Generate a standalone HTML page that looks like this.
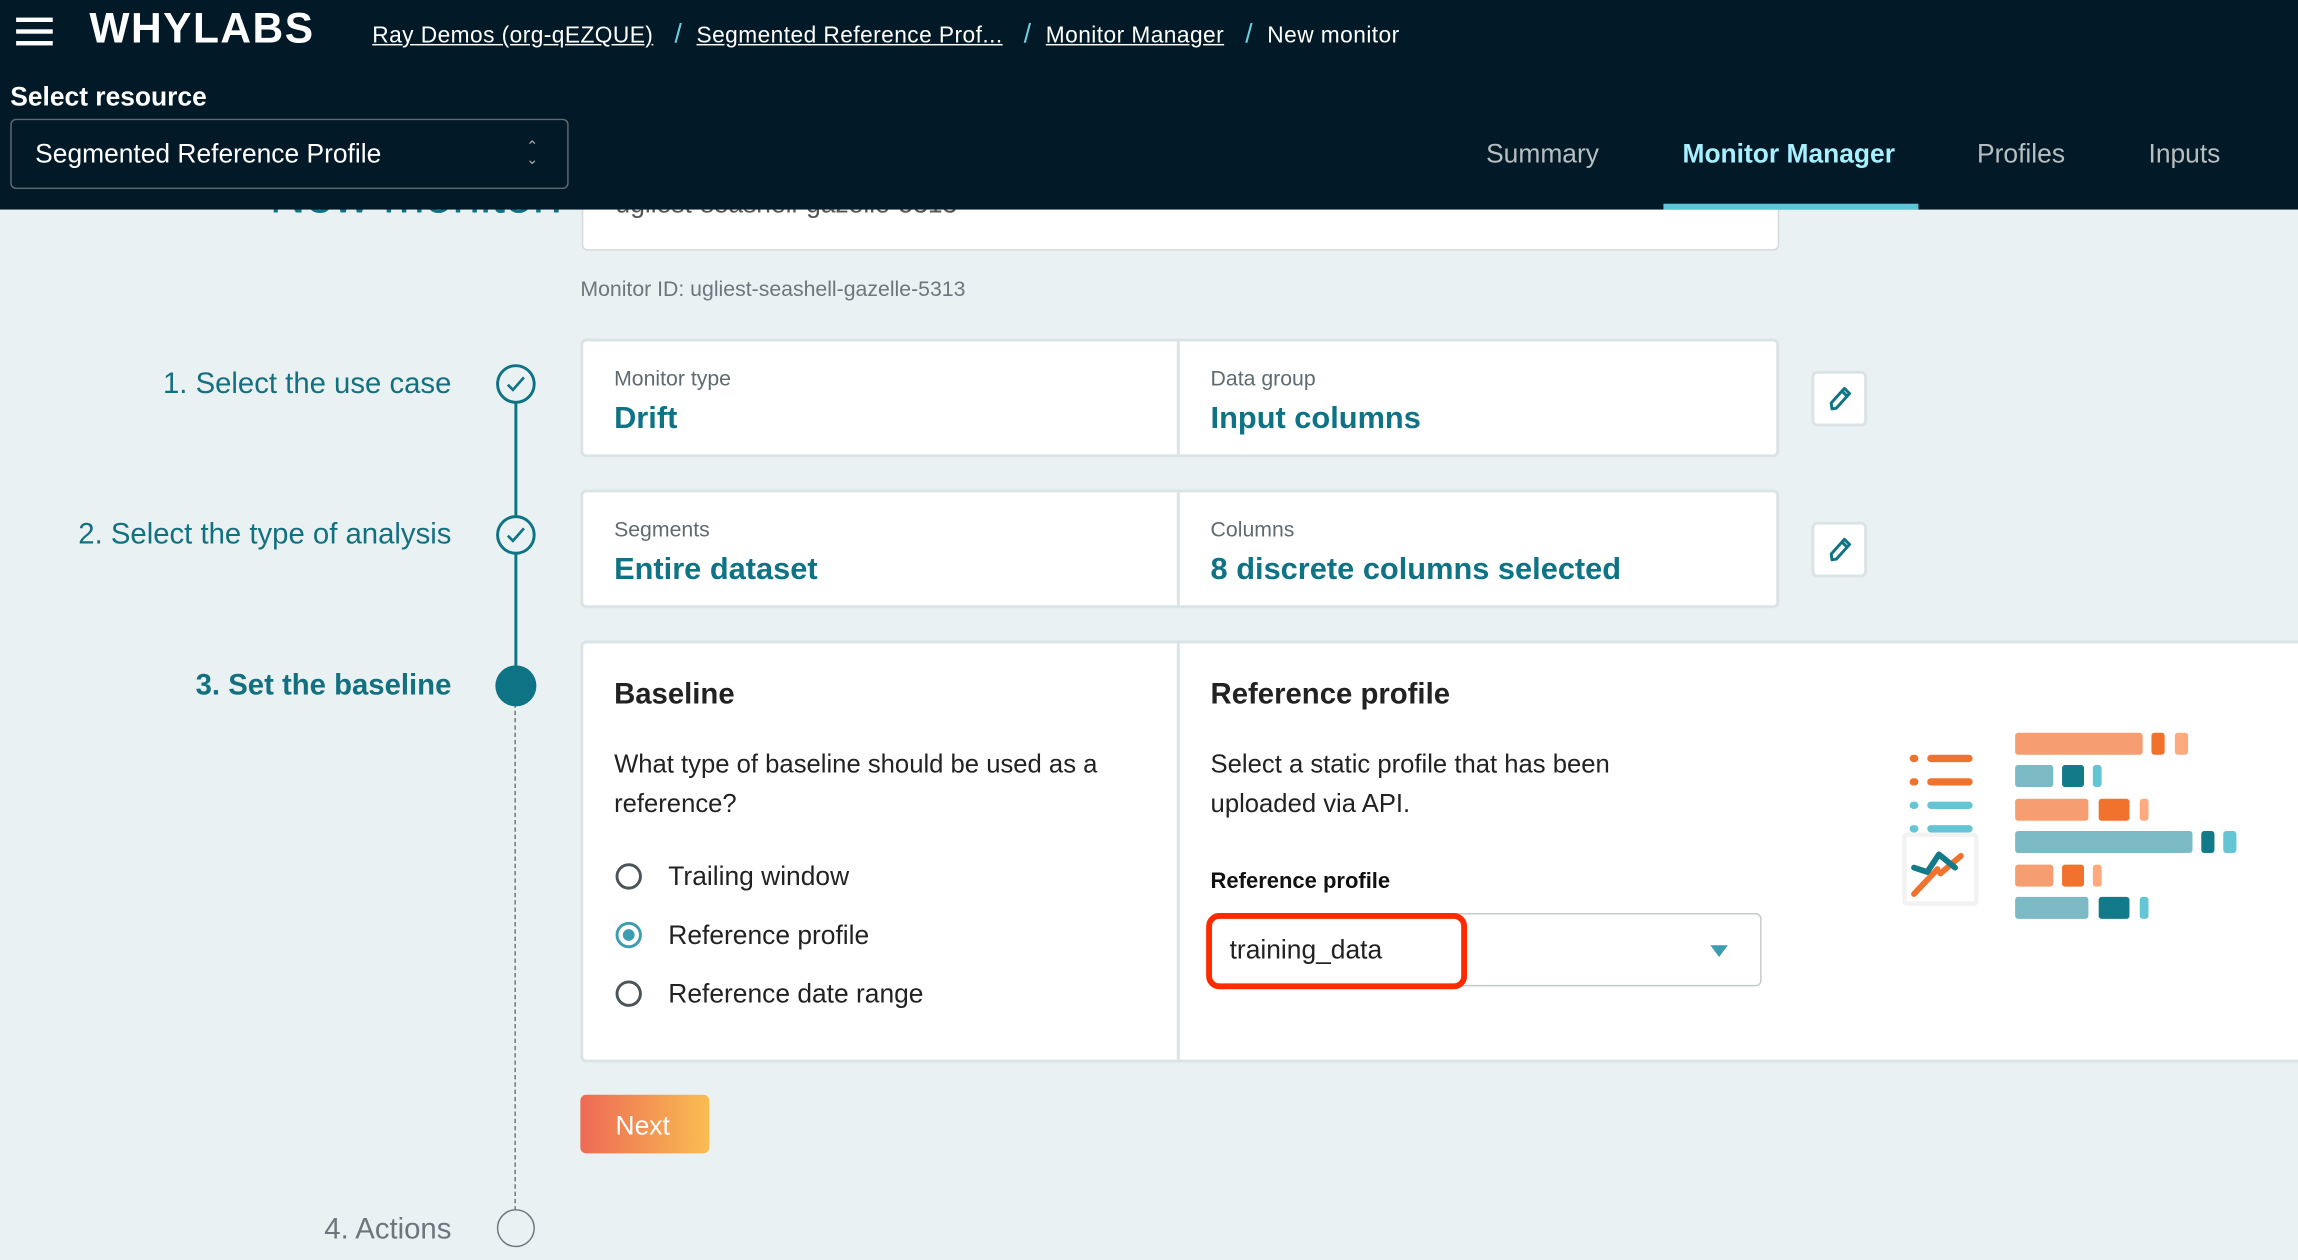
<!DOCTYPE html>
<html><head><meta charset="utf-8"><style>
html,body{margin:0;padding:0;width:2298px;height:1260px;overflow:hidden;background:#eaf1f3}
#s{position:absolute;left:0;top:0;width:1568px;height:860px;transform:scale(1.46556);transform-origin:0 0;font-family:"Liberation Sans",sans-serif;background:#eaf1f3;overflow:hidden}
.a{position:absolute;white-space:nowrap}
.hdr{position:absolute;left:0;top:0;width:1568px;height:143px;background:#021a27}
.bc{color:#fff;font-size:15.5px;text-decoration:underline;letter-spacing:0.3px}
.sl{color:#6fd0e0;font-size:18px}
.tab{color:#b7bec2;font-size:18px;top:95px}
.card{position:absolute;background:#fff;border:2px solid #dae3e6;border-radius:4px;box-sizing:border-box}
.lbl{color:#5f6b70;font-size:14.5px}
.val{color:#0e7384;font-size:21px;font-weight:bold}
.step{color:#13707f;font-size:20px;text-align:right;right:1260px}
.edit{position:absolute;width:38px;height:38px;background:#fff;border:2px solid #dae3e6;border-radius:4px;box-sizing:border-box}
.rad{position:absolute;width:18px;height:18px;border:2px solid #4b5559;border-radius:50%;box-sizing:border-box}
.rt{color:#222;font-size:18px}
.b{position:absolute;border-radius:2px}
</style></head><body><div id="s">
<div class="a" style="left:184px;top:115px;color:#0e7384;font-size:34px">New monitor:</div>
<div style="position:absolute;left:397px;top:100px;width:817px;height:71px;background:#fff;border:1px solid #d3dadd;border-radius:4px;box-sizing:border-box"></div>
<div class="a" style="left:420px;top:129px;color:#555;font-size:18px">ugliest-seashell-gazelle-5313</div>
<div class="hdr"></div>
<div style="position:absolute;left:11px;top:12px;width:25px;height:3px;background:#fff;box-shadow:0 8px 0 #fff,0 16px 0 #fff"></div>
<div class="a" style="left:61px;top:4px;color:#fff;font-size:29px;font-weight:bold;letter-spacing:1px">WHYLABS</div>
<div class="a" style="left:254px;top:13px"><span class="bc">Ray Demos (org-qEZQUE)</span> <span class="sl">&nbsp;&nbsp;/&nbsp;&nbsp;</span><span class="bc">Segmented Reference Prof...</span> <span class="sl">&nbsp;&nbsp;/&nbsp;&nbsp;</span><span class="bc">Monitor Manager</span> <span class="sl">&nbsp;&nbsp;/&nbsp;&nbsp;</span><span style="color:#fff;font-size:15.5px;letter-spacing:0.3px">New monitor</span></div>
<div class="a" style="left:7px;top:56px;color:#fff;font-size:18px;font-weight:bold">Select resource</div>
<div style="position:absolute;left:7px;top:81px;width:381px;height:48px;border:1px solid #5d6a70;border-radius:4px;box-sizing:border-box"></div>
<div class="a" style="left:24px;top:95px;color:#fff;font-size:18px">Segmented Reference Profile</div>
<div class="a" style="left:359px;top:96px;color:#aaa;font-size:10px;line-height:9px">&#8963;<br>&#8964;</div>
<div class="a tab" style="left:1014px">Summary</div>
<div class="a tab" style="left:1148px;color:#a6f0ff;font-weight:bold">Monitor Manager</div>
<div class="a tab" style="left:1349px">Profiles</div>
<div class="a tab" style="left:1466px">Inputs</div>
<div style="position:absolute;left:1135px;top:139px;width:174px;height:4px;background:#5cc6d6"></div>

<div class="a" style="left:396px;top:190px;color:#6b777c;font-size:14.5px">Monitor ID: ugliest-seashell-gazelle-5313</div>

<div style="position:absolute;left:351px;top:274px;width:1.5px;height:182px;background:#0e7384"></div>
<div style="position:absolute;left:351px;top:480px;height:346px;border-left:1.5px dashed #6b777c"></div>
<svg class="a" style="left:338px;top:248px" width="28" height="28"><circle cx="14" cy="14" r="12.5" fill="#eaf1f3" stroke="#0e7384" stroke-width="2"/><path d="M8.5 14.5l3.5 3.5 7.5-8.5" fill="none" stroke="#0e7384" stroke-width="1.8"/></svg>
<svg class="a" style="left:338px;top:351px" width="28" height="28"><circle cx="14" cy="14" r="12.5" fill="#eaf1f3" stroke="#0e7384" stroke-width="2"/><path d="M8.5 14.5l3.5 3.5 7.5-8.5" fill="none" stroke="#0e7384" stroke-width="1.8"/></svg>
<div style="position:absolute;left:338px;top:454px;width:28px;height:28px;border-radius:50%;background:#0e7384"></div>
<div style="position:absolute;left:339px;top:825px;width:26px;height:26px;border-radius:50%;border:1.5px solid #6b777c;box-sizing:border-box;background:#eaf1f3"></div>
<div class="a step" style="top:251px">1. Select the use case</div>
<div class="a step" style="top:354px">2. Select the type of analysis</div>
<div class="a step" style="top:457px;font-weight:bold">3. Set the baseline</div>
<div class="a step" style="top:828px;color:#6b777c">4. Actions</div>

<div class="card" style="left:396px;top:231px;width:818px;height:81px"></div>
<div style="position:absolute;left:803px;top:233px;width:2px;height:77px;background:#dae3e6"></div>
<div class="a lbl" style="left:419px;top:251px">Monitor type</div>
<div class="a val" style="left:419px;top:274px">Drift</div>
<div class="a lbl" style="left:826px;top:251px">Data group</div>
<div class="a val" style="left:826px;top:274px">Input columns</div>
<div class="card" style="left:396px;top:334px;width:818px;height:81px"></div>
<div style="position:absolute;left:803px;top:336px;width:2px;height:77px;background:#dae3e6"></div>
<div class="a lbl" style="left:419px;top:354px">Segments</div>
<div class="a val" style="left:419px;top:377px">Entire dataset</div>
<div class="a lbl" style="left:826px;top:354px">Columns</div>
<div class="a val" style="left:826px;top:377px">8 discrete columns selected</div>

<div class="edit" style="left:1236px;top:253px"><svg width="34" height="34" style="position:absolute;left:0;top:0"><path d="M12 24l-0.5-4 9-10 3.5 3.5-9 10z M18.5 11.5l3.5 3.5" fill="none" stroke="#0e7384" stroke-width="2" stroke-linejoin="round"/></svg></div>
<div class="edit" style="left:1236px;top:356px"><svg width="34" height="34" style="position:absolute;left:0;top:0"><path d="M12 24l-0.5-4 9-10 3.5 3.5-9 10z M18.5 11.5l3.5 3.5" fill="none" stroke="#0e7384" stroke-width="2" stroke-linejoin="round"/></svg></div>

<div class="card" style="left:396px;top:437px;width:1190px;height:288px"></div>
<div style="position:absolute;left:803px;top:439px;width:2px;height:284px;background:#dae3e6"></div>
<div class="a" style="left:419px;top:463px;color:#222;font-size:20px;font-weight:bold">Baseline</div>
<div class="a" style="left:419px;top:508px;color:#222;font-size:17.5px;line-height:27px">What type of baseline should be used as a<br>reference?</div>
<div class="rad" style="left:420px;top:589px"></div>
<div class="a rt" style="left:456px;top:588px">Trailing window</div>
<div class="rad" style="left:420px;top:629px;border-color:#3a9db1"><div style="position:absolute;left:3px;top:3px;width:8px;height:8px;border-radius:50%;background:#3a9db1"></div></div>
<div class="a rt" style="left:456px;top:628px">Reference profile</div>
<div class="rad" style="left:420px;top:669px"></div>
<div class="a rt" style="left:456px;top:668px">Reference date range</div>

<div class="a" style="left:826px;top:463px;color:#222;font-size:20px;font-weight:bold">Reference profile</div>
<div class="a" style="left:826px;top:508px;color:#222;font-size:17.5px;line-height:27px">Select a static profile that has been<br>uploaded via API.</div>
<div class="a" style="left:826px;top:593px;color:#111;font-size:15px;font-weight:bold">Reference profile</div>
<div style="position:absolute;left:826px;top:623px;width:376px;height:50px;border:1px solid #c4c9cb;border-radius:4px;box-sizing:border-box"></div>
<div style="position:absolute;left:823px;top:623px;width:178px;height:52px;border:4px solid #ff2a00;border-radius:9px;box-sizing:border-box"></div>
<div class="a" style="left:839px;top:638px;color:#222;font-size:18px">training_data</div>
<div style="position:absolute;left:1167px;top:645px;width:0;height:0;border-left:6px solid transparent;border-right:6px solid transparent;border-top:8px solid #3a9db1"></div>

<div class="b" style="left:1303px;top:515px;width:6px;height:5px;background:#f0722d;border-radius:3px"></div>
<div class="b" style="left:1315px;top:515px;width:31px;height:5px;background:#f0722d;border-radius:3px"></div>
<div class="b" style="left:1303px;top:531px;width:6px;height:5px;background:#f0722d;border-radius:3px"></div>
<div class="b" style="left:1315px;top:531px;width:31px;height:5px;background:#f0722d;border-radius:3px"></div>
<div class="b" style="left:1303px;top:547px;width:6px;height:5px;background:#64c6d5;border-radius:3px"></div>
<div class="b" style="left:1315px;top:547px;width:31px;height:5px;background:#64c6d5;border-radius:3px"></div>
<div class="b" style="left:1303px;top:563px;width:6px;height:5px;background:#64c6d5;border-radius:3px"></div>
<div class="b" style="left:1315px;top:563px;width:31px;height:5px;background:#64c6d5;border-radius:3px"></div>
<div style="position:absolute;left:1298px;top:568px;width:52px;height:50px;border:3px solid #f2f2f2;border-radius:3px;box-sizing:border-box"></div>
<svg class="a" style="left:1298px;top:568px" width="52" height="50"><path d="M14 22L30 5" stroke="#f0722d" stroke-width="4" stroke-linecap="round" transform="translate(-6,20)"/><path d="M20 16L34 4" stroke="#f0722d" stroke-width="4" stroke-linecap="round" transform="translate(6,12)"/><path d="M9 24l9 3 8-12 11 9" fill="none" stroke="#137a8a" stroke-width="4" stroke-linecap="round" stroke-linejoin="round" transform="translate(-1,0)"/></svg>
<div class="b" style="left:1375px;top:500px;width:87px;height:15px;background:#f79d72"></div>
<div class="b" style="left:1468px;top:500px;width:9px;height:15px;background:#f0722d"></div>
<div class="b" style="left:1484px;top:500px;width:9px;height:15px;background:#ffaa7e"></div>
<div class="b" style="left:1375px;top:522px;width:26px;height:15px;background:#7bb9c4"></div>
<div class="b" style="left:1407px;top:522px;width:15px;height:15px;background:#137a8a"></div>
<div class="b" style="left:1428px;top:522px;width:6px;height:15px;background:#64c6d5"></div>
<div class="b" style="left:1375px;top:545px;width:50px;height:15px;background:#f79d72"></div>
<div class="b" style="left:1432px;top:545px;width:21px;height:15px;background:#f0722d"></div>
<div class="b" style="left:1460px;top:545px;width:6px;height:15px;background:#ffaa7e"></div>
<div class="b" style="left:1375px;top:567px;width:121px;height:15px;background:#7bb9c4"></div>
<div class="b" style="left:1502px;top:567px;width:9px;height:15px;background:#137a8a"></div>
<div class="b" style="left:1517px;top:567px;width:9px;height:15px;background:#64c6d5"></div>
<div class="b" style="left:1375px;top:590px;width:26px;height:15px;background:#f79d72"></div>
<div class="b" style="left:1407px;top:590px;width:15px;height:15px;background:#f0722d"></div>
<div class="b" style="left:1428px;top:590px;width:6px;height:15px;background:#ffaa7e"></div>
<div class="b" style="left:1375px;top:612px;width:50px;height:15px;background:#7bb9c4"></div>
<div class="b" style="left:1432px;top:612px;width:21px;height:15px;background:#137a8a"></div>
<div class="b" style="left:1460px;top:612px;width:6px;height:15px;background:#64c6d5"></div>

<div style="position:absolute;left:396px;top:747px;width:88px;height:40px;border-radius:4px;background:linear-gradient(90deg,#ee6a54,#f9bd52)"></div>
<div class="a" style="left:420px;top:758px;color:#fff;font-size:18px">Next</div>
</div></body></html>
